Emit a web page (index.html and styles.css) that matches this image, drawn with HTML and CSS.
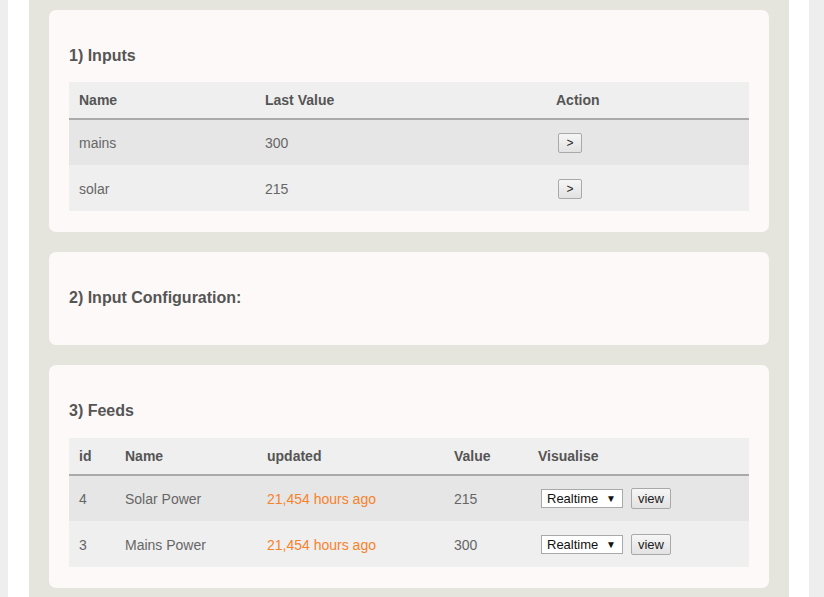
FILE: index.html
```html
<!DOCTYPE html>
<html>
<head>
<meta charset="utf-8">
<link rel="stylesheet" href="styles.css">
</head>
<body>
<div class="page">
  <div class="main">
    <div class="card">
      <h3>1) Inputs</h3>
      <table class="tbl inputs">
        <thead><tr><th class="c1">Name</th><th class="c2">Last Value</th><th>Action</th></tr></thead>
        <tbody>
          <tr><td>mains</td><td>300</td><td><button class="btn go">&gt;</button></td></tr>
          <tr><td>solar</td><td>215</td><td><button class="btn go">&gt;</button></td></tr>
        </tbody>
      </table>
    </div>
    <div class="card">
      <h3>2) Input Configuration:</h3>
    </div>
    <div class="card feeds-card">
      <h3>3) Feeds</h3>
      <table class="tbl feeds">
        <thead><tr><th class="f1">id</th><th class="f2">Name</th><th class="f3">updated</th><th class="f4">Value</th><th>Visualise</th></tr></thead>
        <tbody>
          <tr><td>4</td><td>Solar Power</td><td class="upd">21,454 hours ago</td><td>215</td><td class="vis"><span class="sel">Realtime<span class="arr">&#9660;</span></span><button class="btn view">view</button></td></tr>
          <tr><td>3</td><td>Mains Power</td><td class="upd">21,454 hours ago</td><td>300</td><td class="vis"><span class="sel">Realtime<span class="arr">&#9660;</span></span><button class="btn view">view</button></td></tr>
        </tbody>
      </table>
    </div>
  </div>
</div>
</body>
</html>
```
FILE: styles.css
```css
html, body { margin: 0; padding: 0; }
body {
  background: #eeeeee;
  font-family: "Liberation Sans", Arial, sans-serif;
  color: #666;
  height: 597px;
  overflow: hidden;
}
.page {
  margin: 0 15px 0 8px;
  background: #ffffff;
  padding: 0 20px 0 21px;
  height: 597px;
}
.main {
  background: #e5e5dd;
  padding: 10px 20px 20px 20px;
  height: 100%;
  box-sizing: border-box;
}
.card {
  background: #fdf9f8;
  border-radius: 7px;
  padding: 20px 20px 21px 20px;
  margin-bottom: 20px;
}
.card h3 {
  margin: 16px 0 16px 0;
  font-size: 16px;
  line-height: 20px;
  font-weight: bold;
  color: #555;
}
.feeds-card h3 { margin-bottom: 17px; }
.tbl {
  width: 100%;
  border-collapse: collapse;
  font-size: 14px;
}
.tbl th {
  text-align: left;
  background: #efefef;
  height: 36px;
  padding: 0 10px;
  border-bottom: 2px solid #aaaaaa;
  color: #555;
  font-weight: bold;
}
.tbl td {
  height: 45px;
  padding: 0 10px;
  color: #666;
}
.tbl tbody tr:nth-child(1) td { background: #e6e6e6; }
.tbl tbody tr:nth-child(2) td { background: #efefef; border-top: 1px solid #efefef; }
.inputs .c1 { width: 166px; }
.inputs .c2 { width: 271px; }
.feeds .f1 { width: 26px; }
.feeds .f2 { width: 122px; }
.feeds .f3 { width: 167px; }
.feeds .f4 { width: 64px; }
.upd { color: #f7822c !important; }
.btn {
  font-family: "Liberation Sans", Arial, sans-serif;
  font-size: 13px;
  color: #222;
  background: linear-gradient(#f6f6f6, #e2e2e2);
  border: 1px solid #a9a9a9;
  border-radius: 2px;
  height: 20px;
  padding: 0;
  margin: 0;
  vertical-align: middle;
}
.go { width: 24px; margin-left: 2px; font-size: 12px; }
.view { width: 40px; height: 21px; margin-left: 8px; }
.vis { white-space: nowrap; }
.sel {
  display: inline-flex;
  align-items: center;
  justify-content: space-between;
  box-sizing: border-box;
  width: 82px;
  height: 19px;
  margin-left: 3px;
  padding: 0 6px 0 5px;
  background: #fff;
  border: 1px solid #a9a9a9;
  font-size: 13px;
  color: #111;
  vertical-align: middle;
}
.arr { font-size: 10px; }
```
